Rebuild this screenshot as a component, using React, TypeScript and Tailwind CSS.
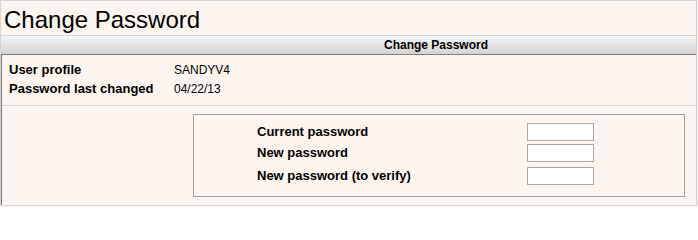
export default function App() {
  const font = { fontFamily: '"Liberation Sans", Arial, sans-serif' };
  return (
    <div className="w-[698px] h-[207px] bg-[#fcf5f0] text-black" style={font}>
      <div className="w-[697px] h-[206px] border border-[#d6d6d6] flex flex-col">
        <div className="h-[35px] pl-[3px] pt-[5px] text-[24px] leading-[28px] border-b border-[#d3d7de]">
          Change Password
        </div>
        <div className="h-[19px] bg-gradient-to-b from-[#f6f6f6] to-[#d3d3d3] border-b border-[#7f7f7f] pl-[383px] text-[12px] font-bold leading-[18px]">
          Change Password
        </div>
        <div className="border-l border-[#777777] flex-1 flex flex-col">
          <div className="pt-[5px] pb-[7px] pl-[7px] border-b border-[#d8d8d8]">
            <div className="flex h-[19px] items-center">
              <span className="w-[165px] font-bold text-[13px]">User profile</span>
              <span className="text-[12px]">SANDYV4</span>
            </div>
            <div className="flex h-[19px] items-center">
              <span className="w-[165px] font-bold text-[13px]">Password last changed</span>
              <span className="text-[12px]">04/22/13</span>
            </div>
          </div>
          <div className="pt-[8px] pl-[191px]">
            <div className="w-[492px] h-[83px] border border-[#a0a0a0] pt-[6px] pl-[63px] text-[13px] font-bold">
              <div className="flex items-center h-[21px]">
                <span className="w-[270px]">Current password</span>
                <input type="password" className="w-[67px] h-[18px] bg-white border border-[#a8a8a8]" />
              </div>
              <div className="flex items-center h-[22px]">
                <span className="w-[270px]">New password</span>
                <input type="password" className="w-[67px] h-[18px] bg-white border border-[#a8a8a8]" />
              </div>
              <div className="flex items-center h-[23px]">
                <span className="w-[270px]">New password (to verify)</span>
                <input type="password" className="w-[67px] h-[18px] bg-white border border-[#a8a8a8]" />
              </div>
            </div>
          </div>
        </div>
      </div>
    </div>
  );
}
